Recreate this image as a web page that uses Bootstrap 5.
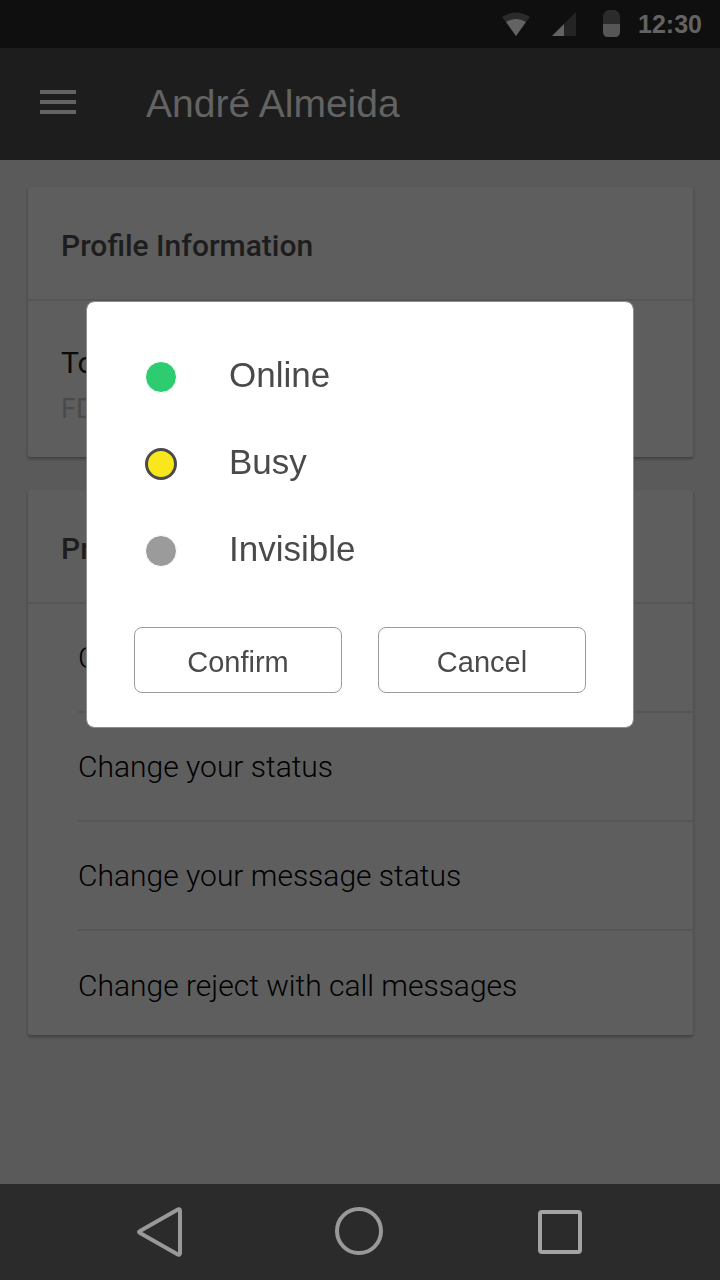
<!DOCTYPE html>
<html lang="en">
<head>
<meta charset="utf-8">
<meta name="viewport" content="width=device-width, initial-scale=1">
<title>André Almeida</title>
<link href="https://cdn.jsdelivr.net/npm/bootstrap@5.3.0/dist/css/bootstrap.min.css" rel="stylesheet">
<style>
body{background:#5a5a5a;font-family:"Liberation Sans",Arial,sans-serif}
.status-bar{background:#0f0f0f;height:48px;gap:18px;padding-right:18px;color:#636363;font-size:25px;line-height:48px}
.app-bar{background:#1d1d1d;height:112px;padding:0 40px 2px;gap:70px}
.app-bar h1{font-size:39px;line-height:48px;padding-top:2px;color:#636363}
.page-body{padding:27px 27px 40px 28px;gap:33px;font-family:Roboto,sans-serif}
.panel{background:#5e5e5e;border:0;border-radius:2px;box-shadow:0 2px 3px rgba(0,0,0,.3)}
.panel-title{height:114px;padding:6px 33px 0;border-bottom:2px solid #565656;font-size:30px;font-weight:500;line-height:40px;color:#1d1d1d}
.tox-entry{padding:42px 33px 35px;font-size:30px;line-height:40px;font-weight:400;color:#0a0a0a}
.tox-value{font-size:27px;line-height:25px;padding-top:14px;color:#4a4a4a}
.settings{padding-left:50px}
.settings a{height:109px;border-bottom:2px solid #565656;font-size:30px;font-weight:300;line-height:40px;color:#000}
.settings li:last-child a{height:104px;border:0;padding-top:6px}
.status-dialog{max-width:none;margin:301px 86px 0}
.status-dialog .modal-content{border:1px solid #8c8c8c;border-radius:8px;padding:31px 47px 34px;color:#4a4a4a}
.choice{height:87px;padding-left:11px;gap:52px;font-size:35px;line-height:40px}
.choice span{padding-bottom:4px}
.choice .form-check-input{width:32px;height:32px;margin:0;border:1px solid #fff;background:var(--dot) none;box-shadow:none}
.choice .form-check-input:checked{background:var(--dot) none;border:3px solid #4a4a4a}
.is-online{--dot:#2ecc71}.is-busy{--dot:#f8e71c}.is-invisible{--dot:#9b9b9b}
.dialog-actions{gap:36px;padding-top:33px}
.dialog-actions .btn{flex:1 1 0;height:66px;padding:4px 0 0;border:1px solid #9b9b9b;border-radius:8px;color:#4a4a4a;font-size:29px;line-height:40px}
.system-nav{background:#2b2b2b;height:96px}
.system-nav .btn{width:200px;line-height:0}
</style>
</head>
<body class="d-flex flex-column min-vh-100">
<div class="status-bar d-flex align-items-center justify-content-end">
  <svg width="118" height="28" viewBox="0 0 118 28" aria-hidden="true">
    <path d="M0 7Q14-2 28 7L24 12 14 26 4 12Z" fill="#2b2b2b"/><path d="M4 12Q14 6 24 12L14 26Z" fill="#636363"/>
    <path d="M74 2V26H50Z" fill="#242424"/><path d="M62 14V26H50Z" fill="#636363"/>
    <path d="M106 0h7q5 2 5 7v7h-17V7q0-5 5-7" fill="#2b2b2b"/><path d="M101 14h17v8q0 5-5 5h-7q-5 0-5-5Z" fill="#565656"/>
  </svg>
  <strong>12:30</strong>
</div>
<header class="app-bar d-flex align-items-center">
  <button class="btn p-0 border-0 d-flex" type="button" aria-label="Menu">
    <svg width="36" height="28" viewBox="0 0 36 28"><path d="M0 3h36M0 13h36M0 23h36" stroke="#636363" stroke-width="4"/></svg>
  </button>
  <h1 class="m-0 fw-normal">André Almeida</h1>
</header>
<main class="page-body d-flex flex-column flex-grow-1">
  <section class="panel">
    <h2 class="panel-title m-0 d-flex align-items-center">Profile Information</h2>
    <div class="tox-entry">Tox ID<div class="tox-value">FD</div></div>
  </section>
  <section class="panel">
    <h2 class="panel-title m-0 d-flex align-items-center">Profile</h2>
    <ul class="settings list-unstyled m-0">
      <li><a class="d-flex align-items-center text-decoration-none" href="#">Change</a></li>
      <li><a class="d-flex align-items-center text-decoration-none" href="#">Change your status</a></li>
      <li><a class="d-flex align-items-center text-decoration-none" href="#">Change your message status</a></li>
      <li><a class="d-flex align-items-center text-decoration-none" href="#">Change reject with call messages</a></li>
    </ul>
  </section>
</main>
<nav class="system-nav d-flex align-items-center justify-content-center">
  <button class="btn p-0 border-0" type="button" aria-label="Back"><svg width="48" height="50" viewBox="0 0 48 50"><path d="M4 24L41 3Q44 1 44 4V46Q44 49 41 47L4 26Q2 25 4 24Z" fill="none" stroke="#999" stroke-width="4" stroke-linejoin="round"/></svg></button>
  <button class="btn p-0 border-0" type="button" aria-label="Home"><svg width="50" height="50" viewBox="0 0 50 50"><circle cx="24" cy="24" r="22" fill="none" stroke="#999" stroke-width="4"/></svg></button>
  <button class="btn p-0 border-0" type="button" aria-label="Recent apps"><svg width="44" height="44" viewBox="0 0 44 44"><rect x="2" y="2" width="40" height="40" rx="2" fill="none" stroke="#a3a3a3" stroke-width="4"/></svg></button>
</nav>
<div class="modal d-block" role="dialog" aria-modal="true" aria-label="Change your status">
  <form class="modal-dialog status-dialog">
    <div class="modal-content">
      <label class="choice is-online d-flex align-items-center"><input class="form-check-input" type="radio" name="status"><span>Online</span></label>
      <label class="choice is-busy d-flex align-items-center"><input class="form-check-input" type="radio" name="status" checked><span>Busy</span></label>
      <label class="choice is-invisible d-flex align-items-center"><input class="form-check-input" type="radio" name="status"><span>Invisible</span></label>
      <div class="dialog-actions d-flex">
        <button class="btn" type="button">Confirm</button>
        <button class="btn" type="button">Cancel</button>
      </div>
    </div>
  </form>
</div>
<script src="https://cdn.jsdelivr.net/npm/bootstrap@5.3.0/dist/js/bootstrap.bundle.min.js"></script>
</body>
</html>
